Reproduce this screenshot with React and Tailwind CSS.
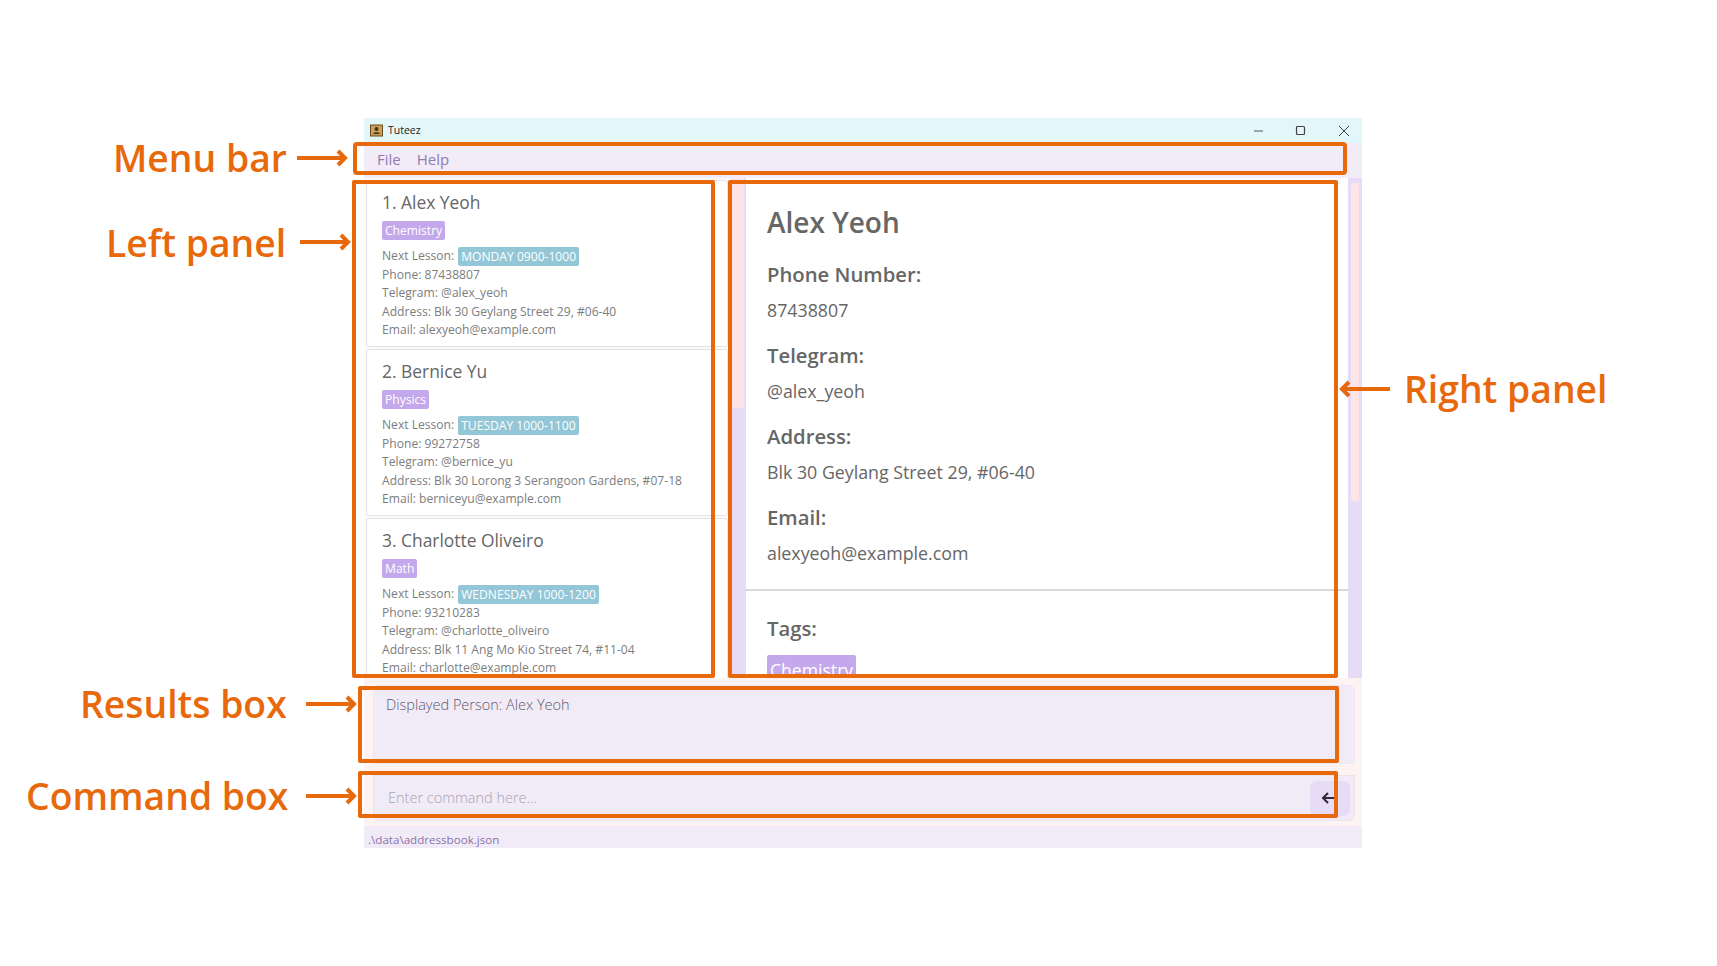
const people = [
  { name: "1. Alex Yeoh", tag: "Chemistry", lesson: "MONDAY 0900-1000", phone: "87438807", telegram: "@alex_yeoh", address: "Blk 30 Geylang Street 29, #06-40", email: "alexyeoh@example.com" },
  { name: "2. Bernice Yu", tag: "Physics", lesson: "TUESDAY 1000-1100", phone: "99272758", telegram: "@bernice_yu", address: "Blk 30 Lorong 3 Serangoon Gardens, #07-18", email: "berniceyu@example.com" },
  { name: "3. Charlotte Oliveiro", tag: "Math", lesson: "WEDNESDAY 1000-1200", phone: "93210283", telegram: "@charlotte_oliveiro", address: "Blk 11 Ang Mo Kio Street 74, #11-04", email: "charlotte@example.com" },
];

const details = [
  ["Phone Number:", "87438807"],
  ["Telegram:", "@alex_yeoh"],
  ["Address:", "Blk 30 Geylang Street 29, #06-40"],
  ["Email:", "alexyeoh@example.com"],
];

function PersonCard({ p }) {
  return (
    <div className="h-[167px] shrink-0 mb-[2px] w-[362px] bg-white rounded-[3px] border border-[#e6e3e6] pl-[15px] pt-[9px] text-[12.1px] leading-[18.3px] text-[#7d7d7d]">
      <div className="text-[17.4px] leading-[24px] text-[#666]">{p.name}</div>
      <div className="mt-[7px] flex">
        <span className="h-[19px] px-[3px] rounded-[2px] bg-[#c4a8ec] text-white font-medium leading-[19px]">{p.tag}</span>
      </div>
      <div className="mt-[6px] flex items-center h-[20px]">
        <span>Next Lesson:</span>
        <span className="ml-[4px] h-[19px] px-[3px] rounded-[2px] bg-[#93c6d6] text-white leading-[19px]">{p.lesson}</span>
      </div>
      <div>Phone: {p.phone}</div>
      <div>Telegram: {p.telegram}</div>
      <div>Address: {p.address}</div>
      <div>Email: {p.email}</div>
    </div>
  );
}

function Arrow({ className, flip }) {
  return (
    <svg className={className} width="54" height="20" viewBox="0 0 54 20" fill="none" stroke="#e8690b" strokeWidth="4">
      {flip ? <path d="M52 10H4M11 3l-7 7 7 7" /> : <path d="M2 10h48M43 3l7 7-7 7" />}
    </svg>
  );
}

function Label({ className, children }) {
  return <div className={"absolute whitespace-nowrap text-[37.3px] leading-[44px] font-semibold text-[#e8690b] " + className}>{children}</div>;
}

export default function App() {
  return (
    <div className="relative h-[966px] w-[1717px] overflow-hidden bg-white pl-[364px] pt-[118px] font-['Open_Sans',sans-serif]">
      {/* app window */}
      <div className="flex h-[730px] w-[998px] flex-col bg-[#fdf3f3]">
        <div className="flex h-[25px] items-center bg-[#e3f6f9] pl-[6px] text-[#222]">
          <svg width="13" height="13" viewBox="0 0 13 13">
            <rect x="0.5" y="1" width="12" height="11" fill="#c9a15c" stroke="#6b4a1e" />
            <circle cx="6.5" cy="5" r="2" fill="#4a3212" />
            <path d="M3 10c.5-2.2 6.500-2.200 7 0z" fill="#4a3212" />
          </svg>
          <span className="ml-[5px] text-[10.5px]">Tuteez</span>
          <div className="ml-auto flex items-center">
            <svg width="12" height="12" viewBox="0 0 12 12" className="mr-[30px]" fill="none" stroke="#555">
              <path d="M1 6h9" />
            </svg>
            <svg width="12" height="12" viewBox="0 0 12 12" className="mr-[31px]" fill="none" stroke="#444" strokeWidth="1.2">
              <rect x="1.500" y="1.500" width="8" height="8" rx="1" />
            </svg>
            <svg width="12" height="12" viewBox="0 0 12 12" className="mr-[12px]" fill="none" stroke="#444">
              <path d="M1 1l10 10M11 1L1 11" />
            </svg>
          </div>
        </div>
        <div className="flex h-[35px] items-center gap-[16px] bg-[#f2ecf8] pb-[2px] pl-[13px] text-[15px] text-[#8f7bb0]">
          <span>File</span>
          <span>Help</span>
        </div>
        <div className="flex h-[500px] overflow-hidden bg-[#fbf9fb]">
          <div className="flex w-[367px] shrink-0 flex-col overflow-hidden pl-[2px] pt-[2px]">
            {people.map((p) => <PersonCard key={p.name} p={p} />)}
          </div>
          <div className="relative h-full w-[15px] shrink-0 bg-[#e6dcf6]">
            <div className="h-[230px] w-[13px] bg-[#fde4e6]" />
          </div>
          <div className="flex-1 overflow-hidden bg-white">
            <div className="h-[413px] border-b-2 border-[#d9d9d9] pl-[21px] pt-[24px] text-[#666]">
              <div className="mb-[17px] text-[28px] leading-[40px] font-semibold">Alex Yeoh</div>
              {details.map(([k, v]) => (
                <div key={k} className="mb-[15px]">
                  <div className="text-[20.3px] leading-[30px] font-semibold">{k}</div>
                  <div className="mt-[6px] text-[17.8px] leading-[30px] font-medium">{v}</div>
                </div>
              ))}
            </div>
            <div className="pl-[21px] pt-[22px] text-[#666]">
              <div className="text-[20.3px] leading-[30px] font-semibold">Tags:</div>
              <div className="mt-[12px] flex">
                <span className="h-[30px] rounded-[2px] bg-[#c4a8ec] px-[3px] text-[17.6px] leading-[30px] text-white font-medium">Chemistry</span>
              </div>
            </div>
          </div>
          <div className="flex w-[14px] shrink-0 justify-center bg-[#e6dcf6] pt-[5px]">
            <div className="h-[318px] w-[8px] rounded-[2px] bg-[#fde4e6]" />
          </div>
        </div>
        <div className="ml-[9px] mr-[7px] mt-[7px] h-[79px] rounded-t-[6px] border border-[#eee9ef] bg-[#f1ebf8] pl-[12px] pt-[7px] text-[14.500px] font-light leading-[24px] text-[#5f5a68]">
          Displayed Person: Alex Yeoh
        </div>
        <div className="ml-[9px] mr-[7px] mt-[11px] flex h-[46px] items-center rounded-b-[6px] border border-[#e9e5ea] bg-[#f1ebf8] pl-[14px] pr-[4px] text-[14.500px] font-light text-[#a8a3b0]">
          <span>Enter command here...</span>
          <div className="ml-auto flex h-[35px] w-[40px] items-center justify-center rounded-[7px] bg-[#e6dcf6]">
            <svg width="16" height="14" viewBox="0 0 16 14" fill="none" stroke="#2e2a36" strokeWidth="2" className="-ml-[2px]">
              <path d="M14 7H2M7 2L2 7l5 5" />
            </svg>
          </div>
        </div>
        <div className="mt-auto flex h-[22px] items-center bg-[#f1ebf8] pl-[4px] pt-[5px] text-[11.6px] text-[#8a74a8]">.\data\addressbook.json</div>
      </div>

      {/* annotation outlines */}
      <div className="absolute left-[353px] top-[142px] h-[33px] w-[994px] rounded-[4px] border-4 border-[#e8690b]" />
      <div className="absolute left-[352px] top-[180px] h-[498px] w-[363px] rounded-[2px] border-4 border-[#e8690b]" />
      <div className="absolute left-[728px] top-[180px] h-[498px] w-[610px] rounded-[2px] border-4 border-[#e8690b]" />
      <div className="absolute left-[358px] top-[686px] h-[77px] w-[981px] rounded-[2px] border-4 border-[#e8690b]" />
      <div className="absolute left-[358px] top-[771px] h-[47px] w-[980px] rounded-[2px] border-4 border-[#e8690b]" />

      <Label className="left-[113px] top-[136px]">Menu bar</Label>
      <Label className="left-[106px] top-[221px]">Left panel</Label>
      <Label className="left-[80px] top-[682px]">Results box</Label>
      <Label className="left-[26px] top-[774px]">Command box</Label>
      <Label className="left-[1404px] top-[367px]">Right panel</Label>
      <Arrow className="absolute left-[295px] top-[148px]" />
      <Arrow className="absolute left-[298px] top-[232px]" />
      <Arrow className="absolute left-[304px] top-[694px]" />
      <Arrow className="absolute left-[304px] top-[786px]" />
      <Arrow flip className="absolute left-[1338px] top-[379px]" />
    </div>
  );
}
